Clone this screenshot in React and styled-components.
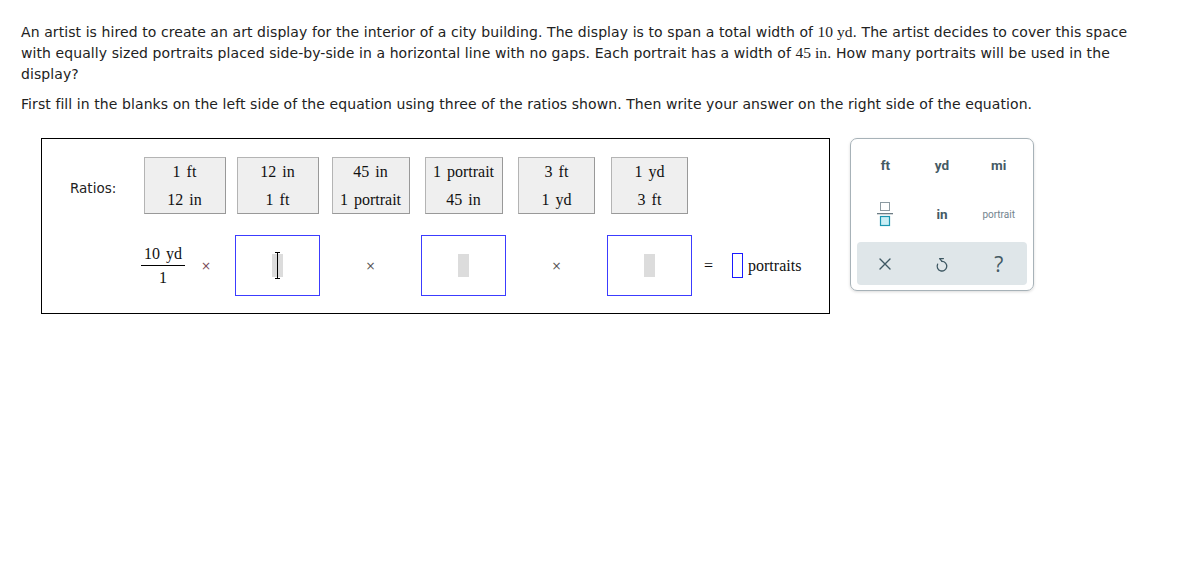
import React from "react";
import styled, { createGlobalStyle } from "styled-components";

const GlobalStyle = createGlobalStyle`
  body {
    margin: 8px;
    background: #fff;
    font-family: "DejaVu Sans", Verdana, sans-serif;
    color: #222;
  }
`;

const ratios = [
  ["1 ft", "12 in", 82],
  ["12 in", "1 ft", 82],
  ["45 in", "1 portrait", 78],
  ["1 portrait", "45 in", 78],
  ["3 ft", "1 yd", 77],
  ["1 yd", "3 ft", 77],
];

function Fraction({ top, bottom, line, tight }) {
  return (
    <Frac>
      <Num $tight={tight}>{top}</Num>
      <Bar style={line ? { width: line } : null} />
      <Den $tight={tight}>{bottom}</Den>
    </Frac>
  );
}

function UndoIcon() {
  return (
    <svg width="16" height="18" viewBox="0 0 16 18" fill="none" stroke="#3e5863" strokeWidth="1.3" strokeLinecap="round" strokeLinejoin="round">
      <path d="M8 6.4 A4.8 4.8 0 1 1 3.6 9.2" />
      <path d="M9.4 3.6 L5.6 3.6 L8 6.4" />
    </svg>
  );
}

function CloseIcon() {
  return (
    <svg width="14" height="14" viewBox="0 0 14 14" stroke="#3e5863" strokeWidth="1.4" strokeLinecap="round">
      <path d="M2 2 L12 12 M12 2 L2 12" />
    </svg>
  );
}

function FracIcon() {
  return (
    <svg width="16" height="26" viewBox="0 0 16 26">
      <rect x="3.5" y="1.5" width="9" height="8" fill="#fff" stroke="#8c9aa1" strokeWidth="1" />
      <rect x="0" y="12" width="16" height="1.3" fill="#6d7d85" />
      <rect x="3.5" y="15.5" width="9" height="9" fill="#c9eef5" stroke="#1b95b0" strokeWidth="1.2" />
    </svg>
  );
}

export default function App() {
  return (
    <Page>
      <GlobalStyle />
      <Para>
        An artist is hired to create an art display for the interior of a city building. The display is to span a total width of{" "}
        <M>10 yd</M>. The artist decides to cover this space
        <br />
        with equally sized portraits placed side-by-side in a horizontal line with no gaps. Each portrait has a width of{" "}
        <M>45 in</M>. How many portraits will be used in the
        <br />
        display?
      </Para>
      <Para>
        First fill in the blanks on the left side of the equation using three of the ratios shown. Then write your answer on the right side of the equation.
      </Para>

      <Work>
        <Board>
          <Label>Ratios:</Label>
          {ratios.map(([t, b, w]) => (
            <Cell key={t + b}>
              <RatioButton $w={w}>
                <Fraction top={t} bottom={b} />
              </RatioButton>
            </Cell>
          ))}
          <span />

          <span />
          <Cell $start>
            <Fraction top="10 yd" bottom="1" line={44} tight />
            <Times $first>×</Times>
          </Cell>
          <Cell>
            <Blank>
              <Slot $cursor />
            </Blank>
          </Cell>
          <Cell>
            <Times>×</Times>
          </Cell>
          <Cell>
            <Blank>
              <Slot />
            </Blank>
          </Cell>
          <Cell>
            <Times>×</Times>
          </Cell>
          <Cell>
            <Blank>
              <Slot />
            </Blank>
          </Cell>
          <Answer>
            <Equals>=</Equals>
            <AnswerBox />
            <Unit>portraits</Unit>
          </Answer>
        </Board>

        <Keypad>
          <Key $bold>ft</Key>
          <Key $bold>yd</Key>
          <Key $bold>mi</Key>
          <Key><FracIcon /></Key>
          <Key $bold>in</Key>
          <Key $small>portrait</Key>
          <Tools>
            <Key><CloseIcon /></Key>
            <Key><UndoIcon /></Key>
            <Key $q>?</Key>
          </Tools>
        </Keypad>
      </Work>
    </Page>
  );
}

const Page = styled.div`
  padding: 6px 13px 5px;
  width: 1150px;
`;

const Para = styled.p`
  font-size: 14px;
  letter-spacing: 0.08px;
  line-height: 21px;
  margin: 8px 0 9px;
  white-space: nowrap;
`;

const M = styled.span`
  font-family: "Liberation Serif", "Times New Roman", serif;
  font-size: 15.5px;
  line-height: 1;
  letter-spacing: 0;
`;

const Work = styled.div`
  display: flex;
  align-items: flex-start;
  gap: 21px;
  margin-top: 23px;
  margin-left: 20px;
`;

const Board = styled.div`
  box-sizing: border-box;
  width: 789px;
  border: 1px solid #000;
  padding: 18px 0 17px 28px;
  display: grid;
  grid-template-columns: 68px repeat(6, 93px) 1fr;
  grid-template-rows: 57px 61px;
  row-gap: 21px;
  align-items: center;
`;

const Label = styled.div`
  font-size: 13.5px;
  color: #222;
  padding-top: 4px;
`;

const Cell = styled.div`
  display: flex;
  align-items: center;
  justify-content: ${(p) => (p.$start ? "flex-start" : "center")};
  padding-left: ${(p) => (p.$start ? "3px" : "0")};
  height: 100%;
`;

const RatioButton = styled.div`
  box-sizing: border-box;
  width: ${(p) => p.$w}px;
  height: 57px;
  background: #efefef;
  border: 1px solid #b4b4b4;
  border-right-color: #999;
  border-bottom-color: #999;
  display: flex;
  align-items: center;
  justify-content: center;
`;

const Frac = styled.div`
  display: inline-flex;
  flex-direction: column;
  align-items: center;
  font-family: "Liberation Serif", "Times New Roman", serif;
  font-size: 16px;
  color: #111;
  word-spacing: 2px;
`;

const Num = styled.div`
  line-height: 18px;
  padding: 0 2px ${(p) => (p.$tight ? "2px" : "4px")};
  white-space: nowrap;
`;

const Den = styled.div`
  line-height: 18px;
  padding: ${(p) => (p.$tight ? "3px" : "5px")} 2px 0;
  white-space: nowrap;
`;

const Bar = styled.div`
  align-self: stretch;
  height: 1px;
  background: #000;
  margin: 0 auto;
`;

const Times = styled.span`
  font-family: "DejaVu Sans", sans-serif;
  font-size: 12px;
  color: ${(p) => (p.$first ? "#7a4a5a" : "#555")};
  margin-left: ${(p) => (p.$first ? "16px" : "0")};
`;

const Blank = styled.div`
  box-sizing: border-box;
  width: 85px;
  height: 61px;
  border: 1px solid #3c3cff;
  display: flex;
  align-items: center;
  justify-content: center;
`;

const Slot = styled.div`
  position: relative;
  width: 11px;
  height: 23px;
  background: #dcdcdc;

  &::after {
    content: "";
    display: ${(p) => (p.$cursor ? "block" : "none")};
    position: absolute;
    left: 5px;
    top: -1px;
    width: 1px;
    height: 25px;
    background: #000;
  }
  &::before {
    content: "";
    display: ${(p) => (p.$cursor ? "block" : "none")};
    position: absolute;
    left: 3px;
    top: -2px;
    width: 5px;
    height: 27px;
    border-top: 1px solid #000;
    border-bottom: 1px solid #000;
    box-sizing: border-box;
  }
`;

const Answer = styled.div`
  display: flex;
  align-items: center;
  padding-left: 8px;
  font-family: "Liberation Serif", "Times New Roman", serif;
  font-size: 16px;
  color: #111;
`;

const Equals = styled.span`
  font-size: 16px;
  margin-right: 19px;
`;

const AnswerBox = styled.span`
  box-sizing: border-box;
  width: 11px;
  height: 25px;
  border: 1px solid #1a1aff;
  margin-right: 5px;
`;

const Unit = styled.span`
  font-size: 16px;
`;

const Keypad = styled.div`
  box-sizing: border-box;
  width: 184px;
  height: 153px;
  margin-left: -1px;
  border: 1px solid #a7b2b8;
  border-radius: 7px;
  box-shadow: 0 1px 3px rgba(0, 0, 0, 0.15);
  padding: 5px 6px;
  display: grid;
  grid-template-columns: repeat(3, 1fr);
  grid-template-rows: 42px 56px 43px;
  font-family: Roboto, "Open Sans", sans-serif;
`;

const Key = styled.div`
  display: flex;
  align-items: center;
  justify-content: center;
  color: ${(p) => (p.$small ? "#72848e" : "#455a64")};
  font-size: ${(p) => (p.$small ? "10px" : p.$q ? "21px" : "13.5px")};
  font-weight: ${(p) => (p.$bold ? 700 : 400)};
  font-family: ${(p) => (p.$q ? '"Open Sans", sans-serif' : "inherit")};
`;

const Tools = styled.div`
  grid-column: 1 / -1;
  display: grid;
  grid-template-columns: repeat(3, 1fr);
  background: #dfe6e9;
  border-radius: 4px;
`;
